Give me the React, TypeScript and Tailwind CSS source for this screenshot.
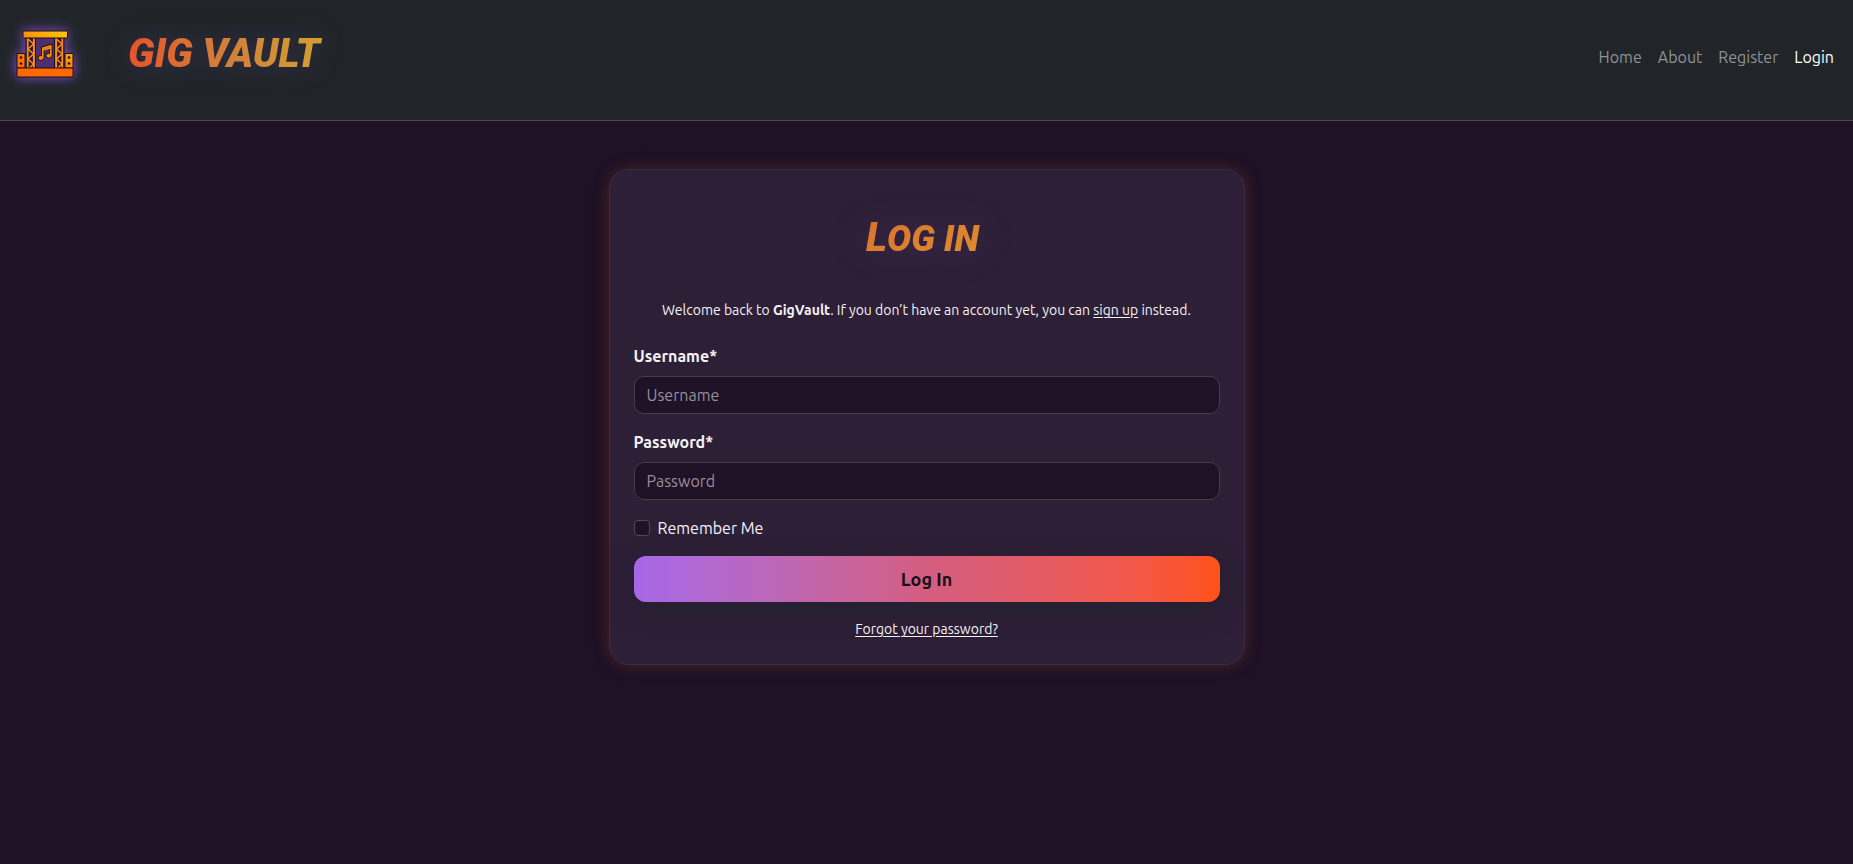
const links = [
  { label: "Home", active: false },
  { label: "About", active: false },
  { label: "Register", active: false },
  { label: "Login", active: true },
];

function Truss({ x }: { x: number }) {
  return (
    <g transform={`translate(${x} 0)`}>
      <rect x="0" y="8" width="9.5" height="30" fill="#2a1740" />
      <path d="M1.6 8v30M7.9 8v30" stroke="#fb8c0c" strokeWidth="2" />
      <path d="M2 9l5.5 5-5.5 5 5.5 5-5.5 5 5.5 5-4 4" fill="none" stroke="#fb8c0c" strokeWidth="1.5" />
      <path d="M0 8v30M9.5 8v30" stroke="#1b0f18" strokeWidth="1" />
    </g>
  );
}

function Speaker({ x }: { x: number }) {
  return (
    <g>
      <rect x={x} y="23.5" width="8" height="14.5" fill="url(#stage)" stroke="#1b0f18" strokeWidth="1" />
      <circle cx={x + 4} cy="27.5" r="1.3" fill="#1b0f18" />
      <circle cx={x + 4} cy="33.5" r="1.3" fill="#1b0f18" />
    </g>
  );
}

function StageLogo() {
  return (
    <svg
      viewBox="0 0 58 48"
      className="h-12 w-[58px] overflow-visible [filter:drop-shadow(0_0_6px_#8550d8)]"
      aria-hidden="true"
    >
      <defs>
        <linearGradient id="stage" gradientUnits="userSpaceOnUse" x1="10" y1="44" x2="38" y2="0">
          <stop offset="0" stopColor="#ff6a00" />
          <stop offset="0.5" stopColor="#fb8308" />
          <stop offset="1" stopColor="#ffbf0a" />
        </linearGradient>
      </defs>
      <rect x="18" y="8" width="22" height="30" fill="#4d2f70" />
      <Truss x={10} />
      <Truss x={38.5} />
      <Speaker x={1} />
      <Speaker x={49} />
      <rect x="7" y="1" width="44.5" height="7" rx="1" fill="url(#stage)" stroke="#1b0f18" />
      <rect x="1" y="38" width="56" height="9" rx="1" fill="#ff6a00" stroke="#1b0f18" />
      <path d="M26.8 27.4V18.2l8-2.3v9.3" fill="none" stroke="#1b0f18" strokeWidth="3.6" />
      <ellipse cx="24.8" cy="28" rx="2.9" ry="2.5" fill="#fb8308" stroke="#1b0f18" />
      <ellipse cx="32.8" cy="25.7" rx="2.9" ry="2.5" fill="#fb8308" stroke="#1b0f18" />
      <path d="M26.8 28V18.2l8-2.3v9.6M26.8 20l8-2.3" fill="none" stroke="#fb8b0a" strokeWidth="1.7" />
    </svg>
  );
}

function Field({ id, label, type }: { id: string; label: string; type: string }) {
  return (
    <div className="mb-4">
      <label htmlFor={id} className="mb-2 block font-semibold">
        {label}*
      </label>
      <input
        id={id}
        type={type}
        placeholder={label}
        className="block h-[38px] w-full rounded-[10px] border border-[#493a43] bg-[#1f1126] px-3 placeholder:text-[#96909b]"
      />
    </div>
  );
}

export default function App() {
  return (
    <div className="min-h-screen bg-[#1f1126] font-['Ubuntu','Noto_Sans',sans-serif] text-base text-[#f5f2f7]">
      <header className="flex h-[121px] items-start justify-between border-b border-[#4d4a5a] bg-[#212529] px-3">
        <a href="#home" className="flex items-start pt-[30px] pl-1">
          <StageLogo />
          <span className="ml-[54px] bg-linear-to-r from-[#e5532a] via-[#d0803a] to-[#d3a02f] bg-clip-text pr-2 font-['Roboto',sans-serif] text-[40px]/[48px] font-black text-transparent uppercase italic drop-shadow-[0_0_12px_#6f4ac040]">
            Gig Vault
          </span>
        </a>
        <nav className="flex gap-4 pt-[45px] pr-[7px]">
          {links.map((link) => (
            <a
              key={link.label}
              href={`#${link.label.toLowerCase()}`}
              className={link.active ? "text-white" : "text-[#909294]"}
            >
              {link.label}
            </a>
          ))}
        </nav>
      </header>

      <main className="px-3 pt-12 pb-12">
        <section className="mx-auto max-w-[636px] rounded-[20px] border border-[#3a2a4b] bg-[#2d1f36] px-6 pt-11 pb-6 shadow-[-2px_0_16px_#5c2a1e59,2px_0_16px_#60401f59]">
          <h1 className="mb-[37px] text-center">
            <span className="inline-block bg-linear-to-br from-[#dc6f2c] to-[#dc9030] bg-clip-text pr-2 font-['Roboto',sans-serif] text-4xl/[48px] font-black text-transparent uppercase italic drop-shadow-[0_0_16px_#6f4ac040]">
              <span className="text-[40px]">L</span>og in
            </span>
          </h1>
          <p className="mb-[23px] text-center text-sm/[21px]">
            Welcome back to <strong className="font-semibold">GigVault</strong>. If you don’t have an account yet, you can{" "}
            <a href="#register" className="underline underline-offset-2">
              sign up
            </a>{" "}
            instead.
          </p>
          <form onSubmit={(event) => event.preventDefault()}>
            <Field id="username" label="Username" type="text" />
            <Field id="password" label="Password" type="password" />
            <div className="mb-4 flex items-center gap-2">
              <input
                id="remember"
                type="checkbox"
                className="size-4 appearance-none rounded-sm border border-[#495057] bg-[#1f1126] checked:bg-[#a764e6]"
              />
              <label htmlFor="remember">Remember Me</label>
            </div>
            <button
              type="submit"
              className="block h-[46px] w-full rounded-xl bg-linear-to-r from-[#a667e8] via-[#d45d80] to-[#ff5218] text-lg font-semibold text-[#14101a] shadow-[0_8px_24px_#1b212b80]"
            >
              Log In
            </button>
          </form>
          <p className="mt-[17px] text-center text-sm/[21px]">
            <a href="#forgot" className="underline underline-offset-2">
              Forgot your password?
            </a>
          </p>
        </section>
      </main>
    </div>
  );
}
